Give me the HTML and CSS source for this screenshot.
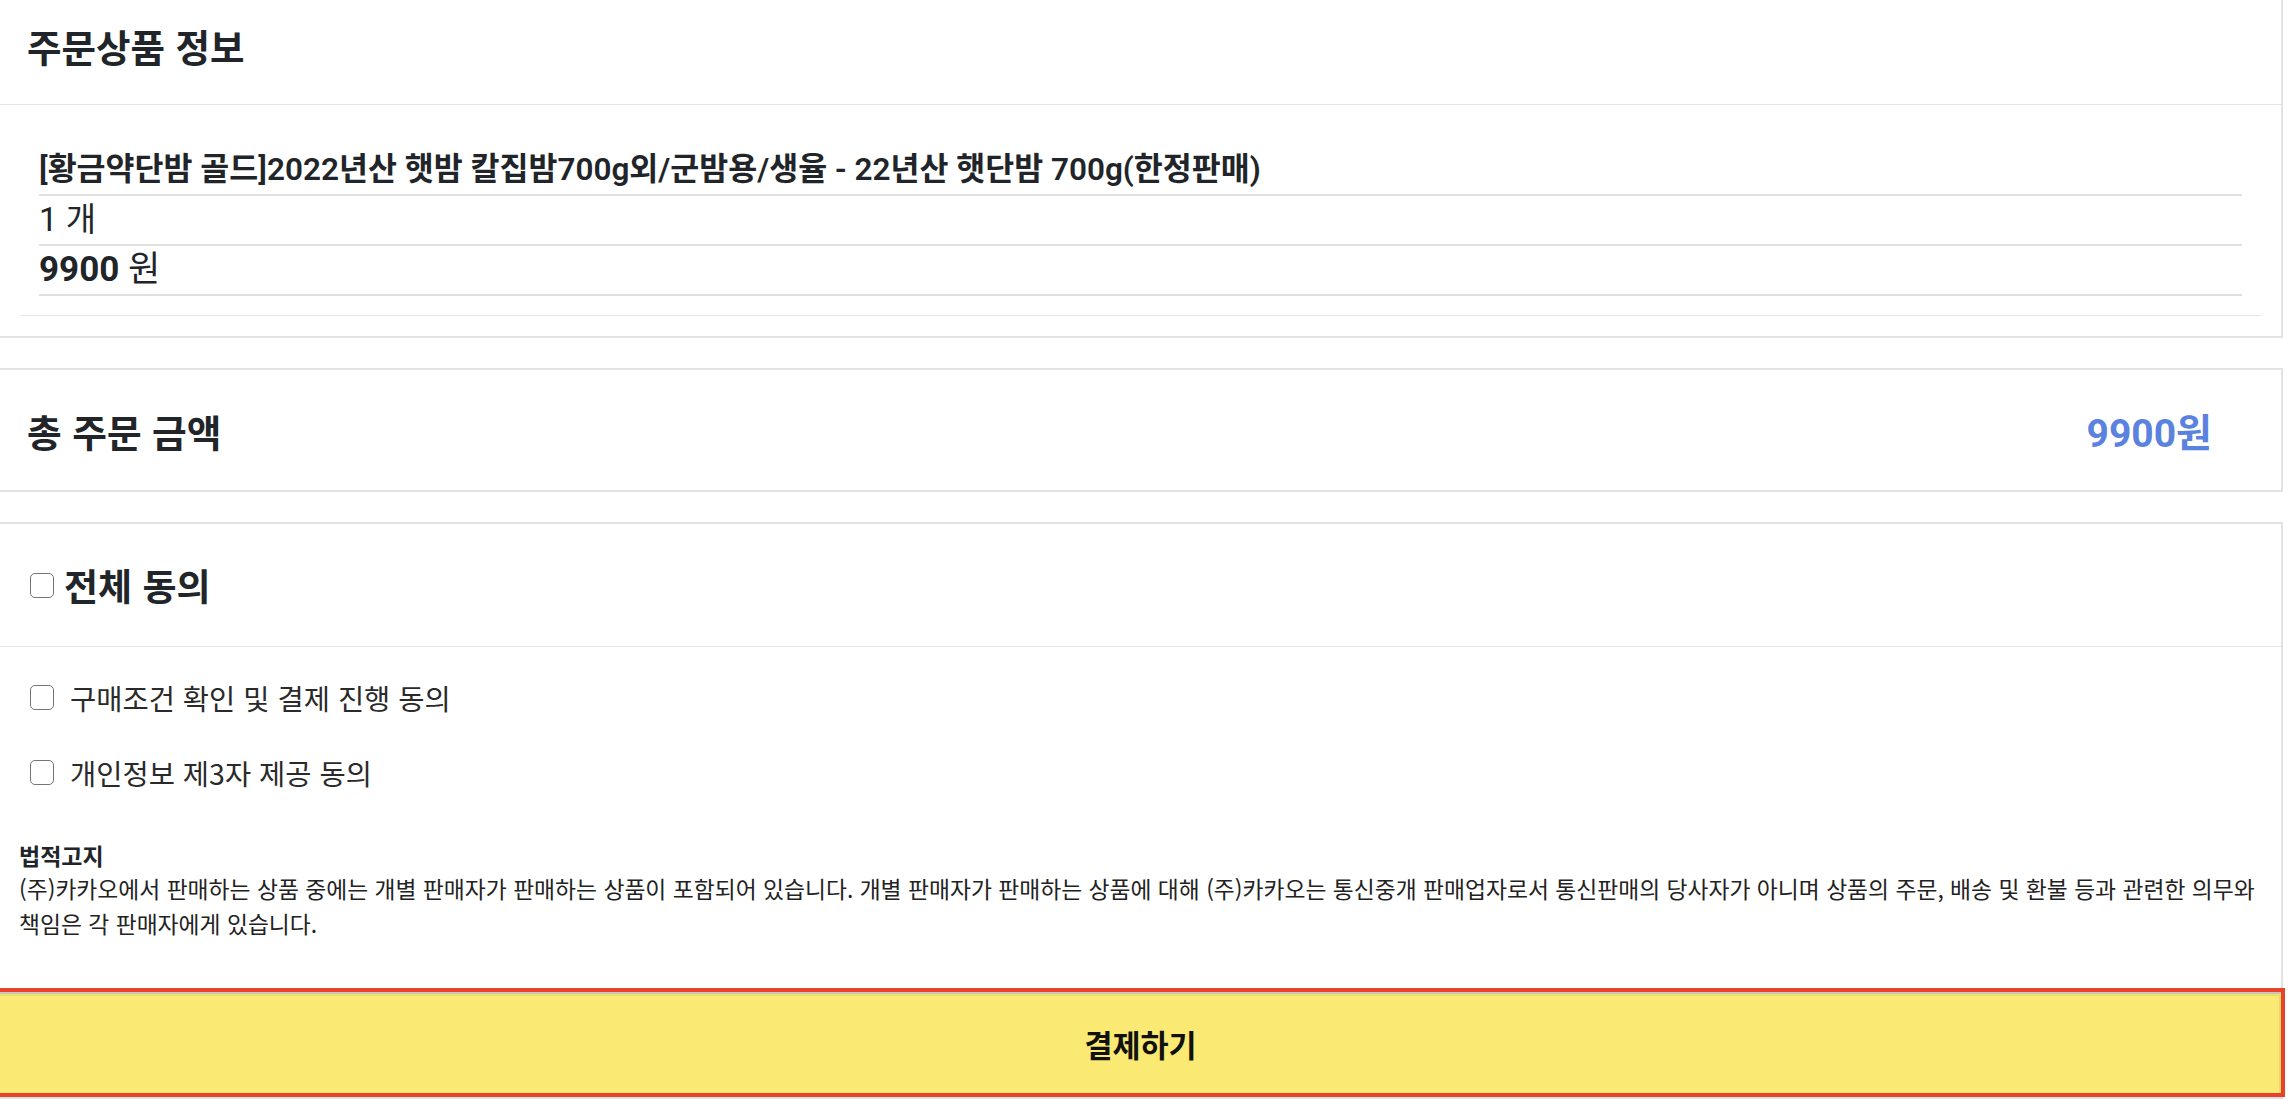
FILE: index.html
```html
<!DOCTYPE html>
<html lang="ko">
<head>
<meta charset="utf-8">
<title>주문서</title>
<link rel="stylesheet" href="styles.css">
</head>
<body>
<div class="page">
  <section class="card order-card">
    <header class="card-head">
      <h2 class="card-title">주문상품 정보</h2>
    </header>
    <ul class="item-list">
      <li class="item">
        <div class="item-row item-name">[황금약단밤 골드]2022년산 햇밤 칼집밤700g외/군밤용/생율 - 22년산 햇단밤 700g(한정판매)</div>
        <div class="item-row item-qty">1 개</div>
        <div class="item-row item-price"><b>9900</b> 원</div>
      </li>
    </ul>
  </section>

  <section class="card total-card">
    <h2 class="total-label">총 주문 금액</h2>
    <span class="total-amount">9900원</span>
  </section>

  <section class="card agree-card">
    <header class="agree-head">
      <label class="agree-all"><input type="checkbox" class="check"><span>전체 동의</span></label>
    </header>
    <div class="agree-list">
      <label class="agree-item"><input type="checkbox" class="check"><span>구매조건 확인 및 결제 진행 동의</span></label>
      <label class="agree-item"><input type="checkbox" class="check"><span>개인정보 제3자 제공 동의</span></label>
    </div>
    <div class="legal">
      <h3 class="legal-title">법적고지</h3>
      <p class="legal-text">(주)카카오에서 판매하는 상품 중에는 개별 판매자가 판매하는 상품이 포함되어 있습니다. 개별 판매자가 판매하는 상품에 대해 (주)카카오는 통신중개 판매업자로서 통신판매의 당사자가 아니며 상품의 주문, 배송 및 환불 등과 관련한 의무와 책임은 각 판매자에게 있습니다.</p>
    </div>
    <button class="pay-btn" type="button">결제하기</button>
  </section>
</div>
</body>
</html>
```

FILE: styles.css
```css
* { box-sizing: border-box; }
html, body { margin: 0; padding: 0; background: #fff; overflow: hidden; }
body {
  font-family: Roboto, "Noto Sans CJK KR", sans-serif;
  color: #212529;
}
.page {
  width: 2285px;
  margin: -2px 0 0 -2px;
}
.card {
  border: 2px solid #e2e2e2;
  background: #fff;
}
.card + .card { margin-top: 30px; }

/* order card */
.card-head {
  height: 105px;
  border-bottom: 1px solid #e4e4e4;
  display: flex;
  align-items: center;
  padding: 0 0 14px 27px;
}
.card-title {
  margin: 0;
  font-family: "Noto Sans CJK KR", sans-serif;
  font-size: 37.5px;
  font-weight: 700;
}
.item-list {
  list-style: none;
  margin: 0;
  padding: 41px 20px 20px;
}
.item {
  padding: 0 19px 19px;
  border-bottom: 1px solid #e6e6e6;
}
.item-row {
  height: 50px;
  line-height: 48px;
  border-bottom: 2px solid #e0e0e0;
  white-space: nowrap;
}
.item-name { font-size: 31.5px; font-weight: 600; }
.item-qty { font-size: 33px; }
.item-price { font-size: 35px; }
.item-price b { font-weight: 700; }

/* total card */
.total-card {
  height: 124px;
  display: flex;
  align-items: center;
  justify-content: space-between;
  padding: 0 69px 0 27px;
}
.total-label {
  margin: 0;
  font-family: "Noto Sans CJK KR", sans-serif;
  font-size: 37.7px;
  font-weight: 700;
}
.total-amount {
  font-size: 39px;
  font-weight: 700;
  color: #5b82de;
}

/* agreement card */
.agree-head {
  height: 123px;
  border-bottom: 1px solid #e4e4e4;
  display: flex;
  align-items: center;
  padding-left: 30px;
}
.check {
  appearance: none;
  -webkit-appearance: none;
  width: 24px;
  height: 25px;
  margin: 0;
  border: 1.5px solid #747474;
  border-radius: 5px;
  background: #fff;
  flex: none;
}
.agree-all {
  display: flex;
  align-items: center;
  gap: 10px;
  font-family: "Noto Sans CJK KR", sans-serif;
  font-size: 37px;
  font-weight: 700;
}
.agree-list {
  display: flex;
  flex-direction: column;
  gap: 25px;
  padding: 25px 0 0 30px;
}
.agree-item {
  height: 50px;
  display: flex;
  align-items: center;
  gap: 16px;
  font-family: "Noto Sans CJK KR", sans-serif;
  font-size: 28.5px;
  color: #2a2a2a;
}
.legal {
  padding: 43px 10px 0 19px;
}
.legal-title {
  margin: 0;
  height: 30px;
  line-height: 30px;
  font-family: "Noto Sans CJK KR", sans-serif;
  font-size: 23px;
  font-weight: 700;
}
.legal-text {
  margin: 1px 0 0;
  font-family: "Noto Sans CJK KR", sans-serif;
  font-size: 22.8px;
  line-height: 35px;
  color: #222;
  word-break: keep-all;
}
.pay-btn {
  display: block;
  width: 100%;
  height: 101px;
  margin: 51px 0 4px;
  background: #fae973;
  border: 0;
  border-top: 2px solid #c8c6b8;
  box-shadow: inset 0 2px 0 #efdd6c, inset -2px 0 0 #e9d86a;
  outline: 4px solid #e8432a;
  font-family: "Noto Sans CJK KR", sans-serif;
  font-size: 30.5px;
  font-weight: 700;
  color: #111;
}
```
